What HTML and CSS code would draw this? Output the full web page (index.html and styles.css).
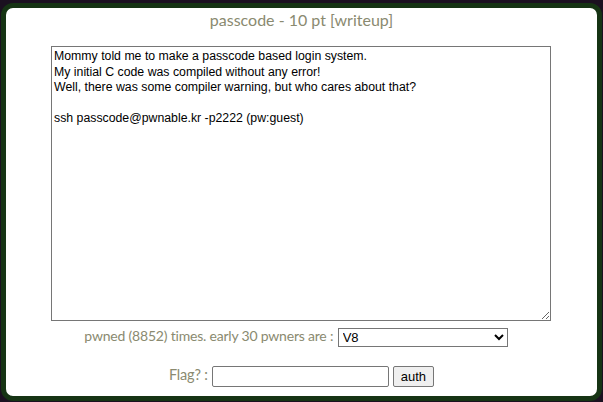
FILE: index.html
```html
<!DOCTYPE html>
<html>
<head>
  <title>passcode</title>
  <link rel="stylesheet" href="styles.css">
</head>
<body>
  <div class="popup">
    <div class="titulo">passcode - 10 pt [writeup]</div>
    <textarea class="desc" readonly>Mommy told me to make a passcode based login system.
My initial C code was compiled without any error!
Well, there was some compiler warning, but who cares about that?

ssh passcode@pwnable.kr -p2222 (pw:guest)</textarea>
    <div class="linea pwned">
      pwned (8852) times. early 30 pwners are :
      <select class="pwners">
        <option>V8</option>
      </select>
    </div>
    <form class="linea flag">
      Flag? :
      <input type="text" class="flag-input">
      <button type="button" class="auth">auth</button>
    </form>
  </div>
</body>
</html>
```

FILE: styles.css
```css
body {
  margin: 0;
  background-color: #1b1020;
  font-family: Lato, "Liberation Sans", sans-serif;
}

.popup {
  margin: 3px 1px 0 1px;
  height: 388px;
  background-color: white;
  border: 5px solid #163414;
  border-radius: 12px;
  color: #8a8a70;
  text-align: center;
}

.titulo {
  padding-top: 2px;
  font-size: 16px;
  line-height: 20px;
}

.desc {
  display: block;
  box-sizing: border-box;
  width: 500px;
  height: 275px;
  margin: 16px 0 0 45px;
  padding: 2px;
  border: 1px solid #767676;
  font-family: Arial, "Liberation Sans", sans-serif;
  font-size: 12.3px;
  line-height: 15.5px;
  color: #000;
  resize: both;
}

.linea {
  font-size: 14.5px;
  letter-spacing: -0.2px;
  line-height: 20px;
  margin-top: 5px;
}

.pwned {
  font-size: 14px;
  letter-spacing: -0.2px;
  padding-right: 11px;
}

.pwners {
  box-sizing: border-box;
  width: 170px;
  height: 19px;
  margin-left: 1px;
  font-family: Arial, "Liberation Sans", sans-serif;
  font-size: 13px;
  letter-spacing: 0;
  color: #000;
  border: 1px solid #767676;
  border-radius: 0;
  background: white;
  vertical-align: middle;
}

.flag {
  margin-top: 18px;
}

.flag-input {
  box-sizing: border-box;
  width: 177px;
  height: 21px;
  margin-left: 1px;
  border: 1px solid #767676;
  border-radius: 2px;
  vertical-align: middle;
}

.auth {
  box-sizing: border-box;
  height: 21px;
  padding: 0 7px;
  font-family: Arial, "Liberation Sans", sans-serif;
  font-size: 13px;
  letter-spacing: 0;
  color: #000;
  background: #efefef;
  border: 1px solid #767676;
  border-radius: 2px;
  vertical-align: middle;
}
```
